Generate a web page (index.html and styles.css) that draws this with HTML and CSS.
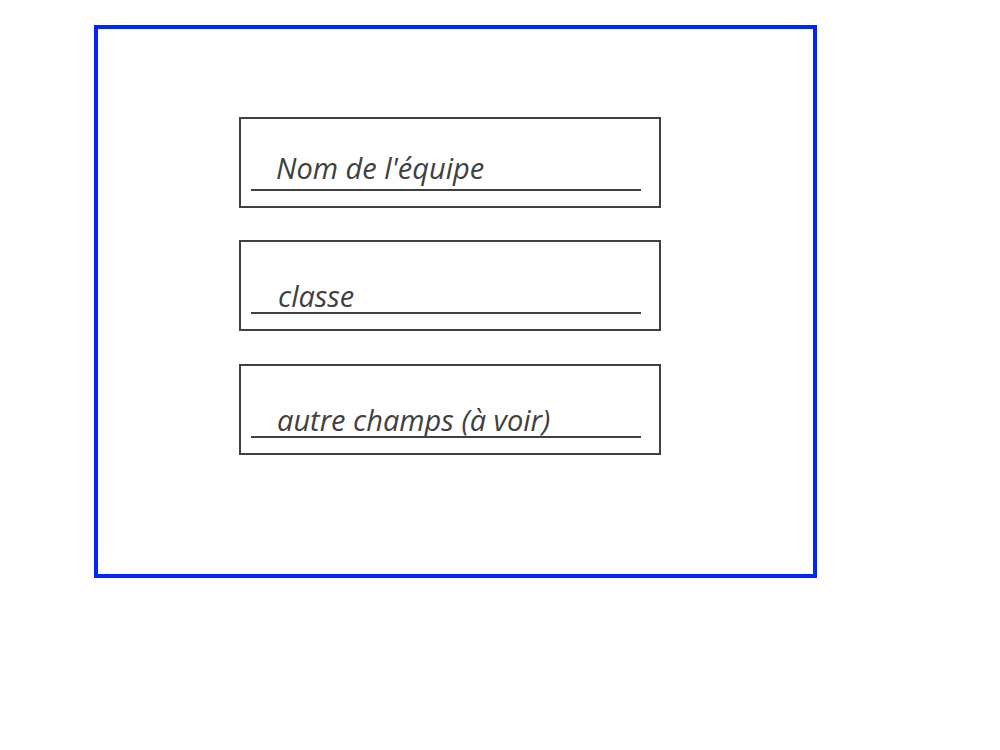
FILE: index.html
```html
<!DOCTYPE html>
<html lang="fr">
<head>
<meta charset="utf-8">
<title>Formulaire équipe</title>
<link rel="stylesheet" href="styles.css">
</head>
<body>
<div class="page">
  <div class="frame">
    <div class="field">
      <div class="field-line"><span class="label label-1">Nom de l'équipe</span></div>
    </div>
    <div class="field field-2">
      <div class="field-line"><span class="label label-2">classe</span></div>
    </div>
    <div class="field field-3">
      <div class="field-line"><span class="label label-3">autre champs (à voir)</span></div>
    </div>
  </div>
</div>
</body>
</html>
```

FILE: styles.css
```css
html, body {
  margin: 0;
  padding: 0;
  background: #ffffff;
}

.page {
  padding: 25px 0 0 94px;
}

.frame {
  width: 574px;
  height: 457px;
  border: 4px solid #0026ff;
  padding-top: 88px;
  padding-left: 141px;
  display: flex;
  flex-direction: column;
}

.field {
  box-sizing: border-box;
  width: 422px;
  height: 91px;
  border: 2px solid #404040;
  padding: 0 18px 15px 10px;
  display: flex;
  flex-direction: column;
  justify-content: flex-end;
}

.field-2 {
  margin-top: 32px;
}

.field-3 {
  margin-top: 33px;
}

.field-line {
  border-bottom: 2px solid #404040;
}

.label {
  display: block;
  font-family: "Open Sans", "Liberation Sans", sans-serif;
  font-style: italic;
  font-size: 29px;
  line-height: 24px;
  color: #404040;
  padding-left: 25px;
  white-space: nowrap;
}

.label-1 { padding-bottom: 9px; }
.label-2 { padding-bottom: 4px; padding-left: 27px; }
.label-3 { padding-bottom: 4px; padding-left: 26px; }
```
